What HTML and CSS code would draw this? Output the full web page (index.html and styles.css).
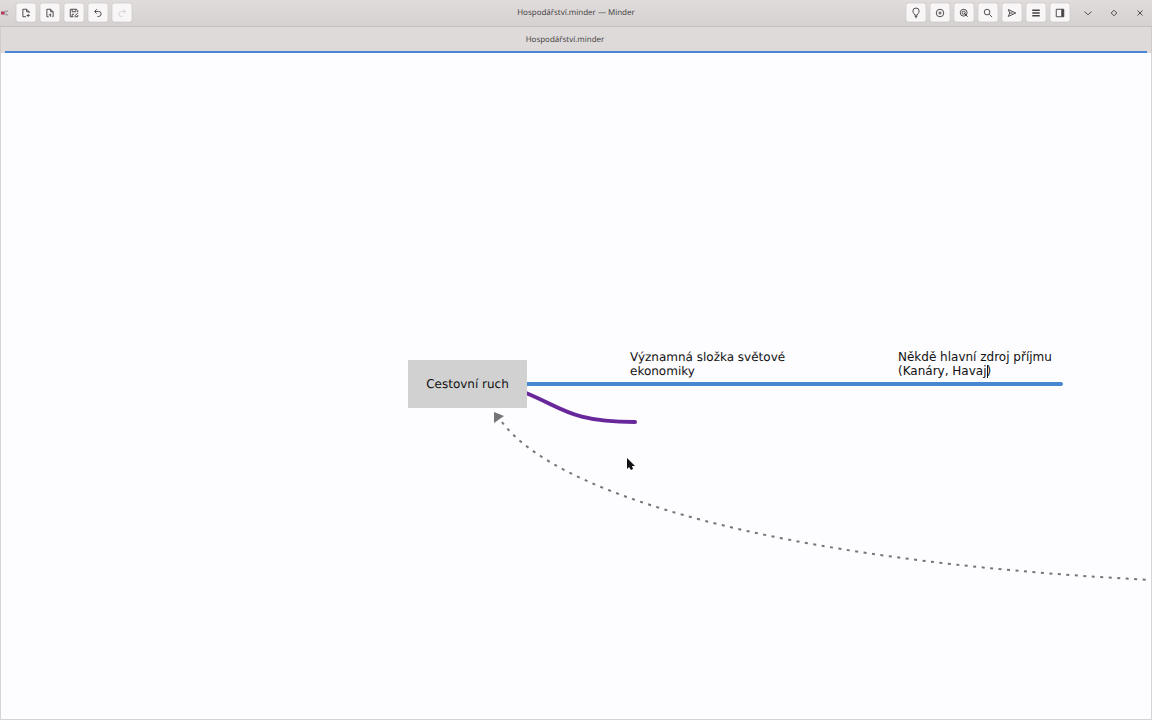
FILE: index.html
```html
<!DOCTYPE html>
<html lang="cs">
<head>
  <meta charset="UTF-8">
  <meta name="viewport" content="width=device-width, initial-scale=1.0">
  <title>Hospodářství.minder — Minder</title>
  <link rel="stylesheet" href="styles.css">
</head>

<body>

  <header class="title-bar">
    <div class="tools tools-left">
      <svg class="app-icon" viewBox="0 0 9 14" aria-hidden="true">
        <path d="M1 7h4" stroke="#b5385c" stroke-width="3"/>
        <path d="M4 6l4-1M4 8l4 1" stroke="#a5a0a5" stroke-width="1.5"/>
      </svg>
      <button class="tool" aria-label="New">
        <svg viewBox="0 0 16 16"><path d="M8 14H3V2h6l4 4v2M9 2v4h4M9 12h5M11.500 9.500v5"/></svg>
      </button>
      <button class="tool" aria-label="Open">
        <svg viewBox="0 0 16 16"><path d="M6 14H3V2h6l4 4v8h-1M9 2v4h4M6 11h3v3M9 9v2"/></svg>
      </button>
      <button class="tool" aria-label="Save as">
        <svg viewBox="0 0 16 16"><path d="M7 14H2V2h10l2 2v3M5 2v4h6V2M5 14v-4h3M9 13l5-5M9 14h5v-3"/></svg>
      </button>
      <button class="tool" aria-label="Undo">
        <svg viewBox="0 0 16 16"><path d="M6 2L2.500 5.500L6 9M3 5.500h6q4 0 4 4t-4 4H7"/></svg>
      </button>
      <button class="tool" aria-label="Redo" disabled>
        <svg viewBox="0 0 16 16"><path d="M10 2l3.500 3.500L10 9M13 5.500H7q-4 0-4 4t4 4h2"/></svg>
      </button>
    </div>

    <h1 class="title">Hospodářství.minder — Minder</h1>

    <div class="tools tools-right">
      <button class="tool" aria-label="Focus mode">
        <svg viewBox="0 0 16 16"><path d="M6 11.500C6 9 3 8.500 3 5a5 5 0 0 1 10 0c0 3.500-3 4-3 6.500zM6 13.500h4M7 15.500h2"/></svg>
      </button>
      <button class="tool" aria-label="Zoom level">
        <svg viewBox="0 0 16 16"><circle cx="8" cy="8" r="6"/><path d="M8 5.500v5M5.500 8h5"/></svg>
      </button>
      <button class="tool" aria-label="Zoom to fit">
        <svg viewBox="0 0 16 16"><circle cx="7.500" cy="7.500" r="5.500"/><circle cx="7.500" cy="7.500" r="2.500"/><path d="M8 8l6 6"/></svg>
      </button>
      <button class="tool" aria-label="Search">
        <svg viewBox="0 0 16 16"><circle cx="6.500" cy="6.500" r="4.500"/><path d="M10 10l4.500 4.500"/></svg>
      </button>
      <button class="tool" aria-label="Export">
        <svg viewBox="0 0 16 16"><path d="M2 2.500L14 8L2 13.500L4.500 8zM4.500 8H9"/></svg>
      </button>
      <button class="tool" aria-label="Menu">
        <svg viewBox="0 0 16 16"><path d="M2 3.500h12M2 8h12M2 12.500h12" stroke-width="2.400"/></svg>
      </button>
      <button class="tool" aria-label="Sidebar">
        <svg viewBox="0 0 16 16"><path d="M2 2h12v12H2z"/><path d="M12 2v12" stroke-width="4"/></svg>
      </button>
      <div class="window-controls">
        <button class="control" aria-label="Minimize">
          <svg viewBox="0 0 16 16"><path d="M2.500 5.500l5.500 5.500l5.500-5.500"/></svg>
        </button>
        <button class="control" aria-label="Maximize">
          <svg viewBox="0 0 16 16"><path d="M8 3.500l4.500 4.500l-4.500 4.500l-4.500-4.500z"/></svg>
        </button>
        <button class="control" aria-label="Close">
          <svg viewBox="0 0 16 16"><path d="M4 4l8 8M12 4L4 12"/></svg>
        </button>
      </div>
    </div>
  </header>

  <nav class="tab-bar">
    <a class="tab active" href="#">Hospodářství.minder</a>
  </nav>

  <main class="canvas">
    <svg class="links" aria-hidden="true">
      <!-- branches -->
      <path class="branch purple" d="M525 340C562 355 570 369 634 369"/>
      <path class="branch blue" d="M526 331H1060"/>
      <!-- connection to another part of the map -->
      <path class="connection" d="M501 369C554 440 769 508 1151 527"/>
      <path class="arrow" d="M493 359l10 4l-10 7z"/>
    </svg>

    <div class="node root">Cestovní ruch</div>
    <div class="node idea">Významná složka světové ekonomiky</div>
    <div class="node editing">
      <textarea class="node-text" aria-label="Node text" rows="2" spellcheck="false">Někdě hlavní zdroj příjmu (Kanáry, Havaj)</textarea>
      <span class="caret"></span>
    </div>

    <svg class="pointer" viewBox="0 0 9 14" aria-hidden="true">
      <path d="M1 1v11l2-2l2 3l2-1l-1-3h3z"/>
    </svg>
  </main>

</body>
</html>
```

FILE: styles.css
```css
* {
  margin: 0;
  padding: 0;
  box-sizing: border-box;
}

body {
  font-family: "Open Sans", "Noto Sans", sans-serif;
  font-size: 8px;
  text-rendering: geometricPrecision;
  color: #3d3b3d;
  display: flex;
  flex-direction: column;
  min-height: 100vh;
  overflow: hidden;
}

button {
  border: none;
  background: none;
}

svg {
  fill: none;
}

/* Title bar */
.title-bar {
  height: 27px;
  padding-bottom: 1px;
  display: grid;
  grid-template-columns: 1fr auto 1fr;
  align-items: center;
  background: linear-gradient(#e0dcdb, #d5d1d0);
  border-bottom: 1px solid #c6c2c1;
}

.title {
  font-size: 8px;
  font-weight: normal;
  padding-bottom: 1px;
}

.tools {
  display: flex;
  align-items: center;
  gap: 4px;
}

.tools-right {
  justify-content: flex-end;
}

.app-icon {
  width: 9px;
  height: 14px;
  margin-right: 3px;
}

.tool {
  width: 20px;
  height: 19px;
  display: flex;
  align-items: center;
  justify-content: center;
  background: #f8f6f6;
  border: 1px solid #e9e6e5;
  border-radius: 2px;
  box-shadow: 0 0 1px #aaa6a5;
}

.tool svg,
.control svg {
  width: 10px;
  height: 10px;
  overflow: visible;
  stroke: #454345;
  stroke-width: 1.5;
}

.tool:disabled svg {
  stroke: #d3d0d0;
}

.window-controls {
  display: flex;
  gap: 2px;
  margin-left: 2px;
}

.control {
  width: 24px;
  height: 19px;
  display: flex;
  align-items: center;
  justify-content: center;
}

/* Tabs */
.tab-bar {
  height: 26px;
  padding: 0 4px;
  background: #dedad9;
  border-left: 1px solid #cfcbca;
  border-right: 1px solid #cfcbca;
}

.tab {
  height: 100%;
  display: flex;
  align-items: center;
  justify-content: center;
  padding-right: 22px;
  color: inherit;
  text-decoration: none;
}

.tab.active {
  border-bottom: 2px solid #4a85d8;
}

/* Mind map */
.canvas {
  position: relative;
  flex: 1;
  overflow: hidden;
  background: #fdfcfe;
  border: 1px solid #d5d3d5;
  border-top: none;
  font-family: "DejaVu Sans", sans-serif;
  font-size: 12px;
  line-height: 14px;
  color: #111;
}

.links {
  position: absolute;
  top: 0;
  left: 0;
  width: 100%;
  height: 100%;
}

.branch {
  stroke-width: 4;
  stroke-linecap: round;
}

.branch.blue {
  stroke: #4689d0;
}

.branch.purple {
  stroke: #68289b;
}

.connection {
  stroke: #757477;
  stroke-width: 2;
  stroke-dasharray: 3 5.5;
}

.arrow {
  fill: #757477;
}

.node {
  position: absolute;
}

.node.root {
  left: 407px;
  top: 307px;
  width: 119px;
  padding: 17px 0;
  text-align: center;
  background: #d2d1d1;
}

.node.idea {
  left: 629px;
  top: 297px;
  width: 170px;
}

.node.editing {
  left: 897px;
  top: 297px;
}

.node-text {
  display: block;
  width: 164px;
  height: 28px;
  font: inherit;
  color: inherit;
  border: none;
  outline: none;
  background: none;
  resize: none;
  overflow: hidden;
}

.caret {
  position: absolute;
  left: 89px;
  top: 15px;
  width: 1px;
  height: 13px;
  background: #111;
}

.pointer {
  position: absolute;
  left: 625px;
  top: 404px;
  width: 9px;
  height: 14px;
  fill: #111;
}
```
